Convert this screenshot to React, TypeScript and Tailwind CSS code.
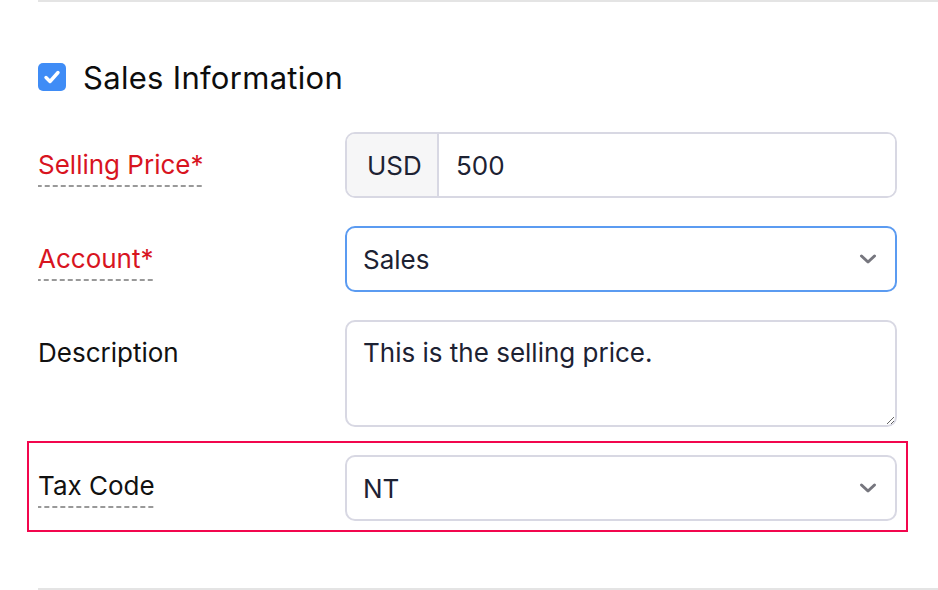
import { ReactNode } from 'react';

function Chevron(){
  return (
    <svg width="18" height="12" viewBox="0 0 18 12" fill="none" className="shrink-0">
      <path d="M2.5 3l6.5 6 6.5-6" stroke="#76767e" strokeWidth="3" strokeLinecap="round" strokeLinejoin="round" />
    </svg>
  );
}

function Label({ children, required, dashed = true, top = 'mt-[17px]' }: { children: ReactNode; required?: boolean; dashed?: boolean; top?: string }){
  return (
    <div className={`${top} self-start`}>
      <span
        className={`inline-block text-[26px] leading-[32px] ${required ? 'text-[#d8141f]' : 'text-[#111]'} ${dashed ? 'pb-[6px] bg-[linear-gradient(to_right,#999999_5px,transparent_5px)] bg-[length:8px_2px] bg-repeat-x bg-bottom' : ''}`}
      >
        {children}
      </span>
    </div>
  );
}

function SelectBox({ value, focused }: { value: string; focused?: boolean }){
  return (
    <div className={`h-[66px] w-[552px] rounded-[10px] border-2 bg-white flex items-center justify-between pl-[16px] pr-[18px] ${focused ? 'border-[#5b9bf1]' : 'border-[#d8d8e3]'}`}>
      <span className="text-[26px] text-[#1d2233]">{value}</span>
      <Chevron />
    </div>
  );
}

export default function App(){
  return (
    <div className="w-[938px] h-[590px] bg-white pl-[38px] font-['Inter',sans-serif] overflow-hidden">
      <div className="h-[2px] bg-[#e4e4e4]" />

      <div className="mt-[61px] flex items-center gap-[17px] h-[28px]">
        <div className="w-[28px] h-[28px] rounded-[5px] bg-[#3f8cf6] flex items-center justify-center">
          <svg width="18" height="14" viewBox="0 0 18 14" fill="none">
            <path d="M3 7.5l4 4 8-9" stroke="white" strokeWidth="3.4" strokeLinecap="round" strokeLinejoin="round" />
          </svg>
        </div>
        <h2 className="text-[31px] tracking-[0.3px] text-[#0d0d0d] leading-none">Sales Information</h2>
      </div>

      <div className="mt-[41px] space-y-[28px]">
        <div className="grid grid-cols-[307px_552px]">
          <Label required>Selling Price*</Label>
          <div className="h-[66px] rounded-[10px] border-2 border-[#d8d8e3] flex overflow-hidden bg-white">
            <div className="w-[92px] bg-[#f6f6f7] border-r-2 border-[#d8d8e3] flex items-center pl-[20px] text-[26px] text-[#1d2233]">USD</div>
            <input readOnly value="500" className="flex-1 pl-[17px] text-[26px] text-[#1d2233] outline-none bg-white" />
          </div>
        </div>

        <div className="grid grid-cols-[307px_552px]">
          <Label required>Account*</Label>
          <SelectBox value="Sales" focused />
        </div>

        <div className="grid grid-cols-[307px_552px]">
          <Label dashed={false}>Description</Label>
          <textarea
            readOnly
            defaultValue="This is the selling price."
            className="h-[107px] rounded-[10px] border-2 border-[#d8d8e3] px-[16px] pt-[14px] pb-[10px] text-[26px] leading-[34px] text-[#1d2233] outline-none bg-white"
          />
        </div>
      </div>

      <div className="mt-[14px] -ml-[11px] w-[881px] border-2 border-[#f2064d] pt-[12px] pb-[9px] px-[9px]">
        <div className="grid grid-cols-[307px_552px]">
          <Label top="mt-[15px]">Tax Code</Label>
          <SelectBox value="NT" />
        </div>
      </div>

      <div className="mt-[56px] h-[2px] bg-[#e4e4e4]" />
    </div>
  );
}
